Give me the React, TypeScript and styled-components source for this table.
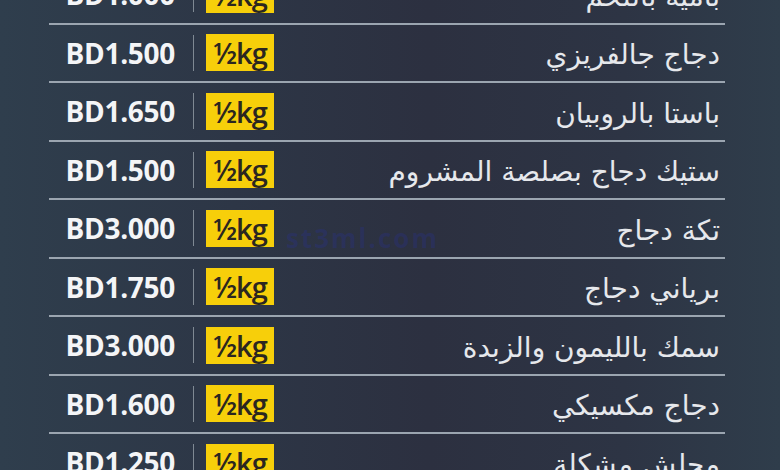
import React from "react";
import styled, { createGlobalStyle } from "styled-components";

const GlobalStyle = createGlobalStyle`
  html, body {
    margin: 0;
    padding: 0;
    width: 780px;
    height: 470px;
    overflow: hidden;
  }
  body {
    background: linear-gradient(90deg, #2f3e4d 0%, #2d3646 30%, #2c3040 55%, #2d3444 80%, #2f3d4b 100%);
  }
`;

const Page = styled.div`
  position: relative;
  width: 780px;
  height: 470px;
  overflow: hidden;
`;

const List = styled.div`
  display: flex;
  flex-direction: column;
  margin-top: -34px;
  margin-left: 49px;
  width: 676px;
`;

const Row = styled.div`
  display: grid;
  grid-template-columns: 127px 1px 68px 1fr;
  align-items: center;
  height: 56.5px;
  border-bottom: 2px solid #9ba5b0;
`;

const Price = styled.div`
  font-family: "Open Sans", "DejaVu Sans", sans-serif;
  font-weight: 700;
  font-size: 28px;
  color: #f4f5f7;
  text-align: right;
  letter-spacing: -0.3px;
  line-height: 1;
  margin-right: 1px;
`;

const Divider = styled.div`
  width: 1px;
  height: 36px;
  background: #7f8993;
  margin-left: 17px;
`;

const Badge = styled.div`
  margin-left: 29px;
  width: 68px;
  height: 37px;
  background: #f7cf0a;
  color: #2b2620;
  font-family: "Open Sans", "DejaVu Sans", sans-serif;
  font-weight: 600;
  font-size: 29px;
  line-height: 37px;
  display: flex;
  align-items: center;
  justify-content: center;
  letter-spacing: -1px;
`;

const Name = styled.div`
  direction: rtl;
  text-align: right;
  padding-right: 5px;
  font-family: "DejaVu Sans", sans-serif;
  font-weight: 400;
  font-size: 28px;
  color: #e6e8ec;
  white-space: nowrap;
  margin-top: 4px;
`;

const Watermark = styled.div`
  position: absolute;
  left: 286px;
  top: 220px;
  font-family: "Open Sans", sans-serif;
  font-weight: 700;
  font-size: 26px;
  letter-spacing: 2px;
  color: rgba(40, 48, 150, 0.28);
  pointer-events: none;
`;

type Item = { price: string; name: string };

const items: Item[] = [
  { price: "BD1.000", name: "بامية باللحم" },
  { price: "BD1.500", name: "دجاج جالفريزي" },
  { price: "BD1.650", name: "باستا بالروبيان" },
  { price: "BD1.500", name: "ستيك دجاج بصلصة المشروم" },
  { price: "BD3.000", name: "تكة دجاج" },
  { price: "BD1.750", name: "برياني دجاج" },
  { price: "BD3.000", name: "سمك بالليمون والزبدة" },
  { price: "BD1.600", name: "دجاج مكسيكي" },
  { price: "BD1.250", name: "مجلش مشكلة" },
];

const App: React.FC = () => {
  return (
    <Page>
      <GlobalStyle />
      <List>
        {items.map((item, i) => (
          <Row key={i}>
            <Price>{item.price}</Price>
            <Divider />
            <Badge>½kg</Badge>
            <Name>{item.name}</Name>
          </Row>
        ))}
      </List>
      <Watermark>st3ml.com</Watermark>
    </Page>
  );
};

export default App;
